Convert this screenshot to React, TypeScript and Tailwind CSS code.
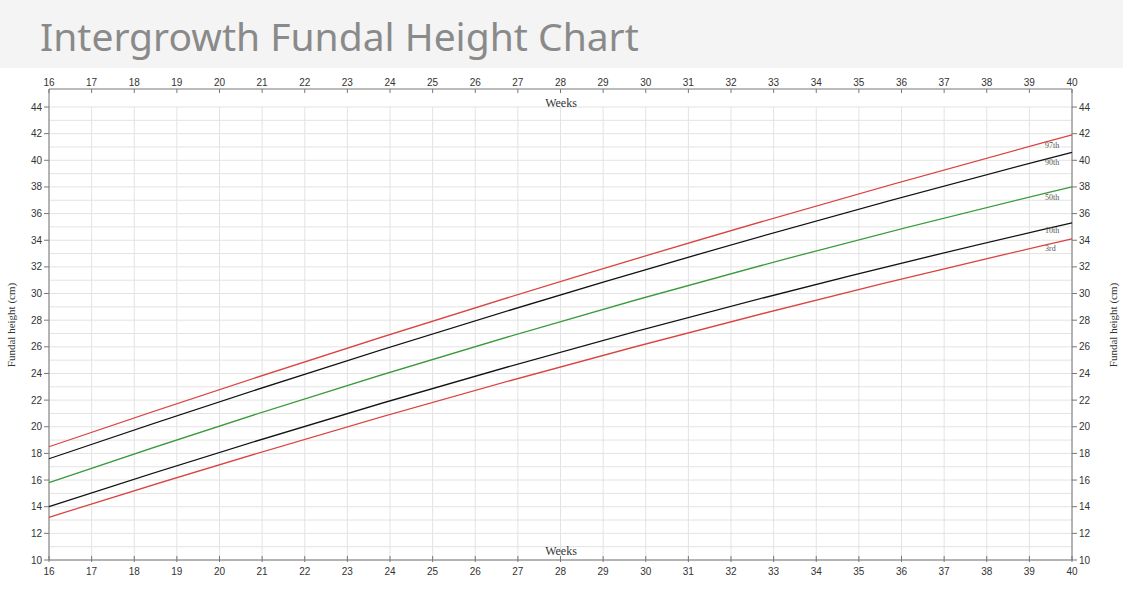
const X0 = 49;
const X1 = 1072;
const Y10 = 560;
const PX_CM = (560 - 107) / 34;
const xw = (w: number) => X0 + ((w - 16) * (X1 - X0)) / 24;
const yc = (c: number) => Y10 - (c - 10) * PX_CM;

const SERIF = '"Liberation Serif", serif';
const SANS = '"Liberation Sans", Arial, sans-serif';

const curves = [
  { name: '97th', a: 18.5, m: 30.9, b: 41.9, color: '#d9443f', ly: 41.3 },
  { name: '90th', a: 17.6, m: 29.9, b: 40.6, color: '#111', ly: 40.0 },
  { name: '50th', a: 15.8, m: 27.9, b: 38.0, color: '#3a9a3a', ly: 37.4 },
  { name: '10th', a: 14.0, m: 25.6, b: 35.3, color: '#111', ly: 34.9 },
  { name: '3rd', a: 13.2, m: 24.5, b: 34.1, color: '#d9443f', ly: 33.6 },
];

const weeks = Array.from({ length: 25 }, (_, i) => 16 + i);
const cms = Array.from({ length: 35 }, (_, i) => 10 + i);

// chart drawing, coordinates in page pixels (viewBox starts under the header)
function Chart() {
  return (
    <svg width="1123" height="532" viewBox="0 68 1123 532" className="block">
      {weeks.map((w) => (
        <line key={'v' + w} x1={xw(w)} x2={xw(w)} y1={yc(44)} y2={Y10} stroke="#e3e3e3" />
      ))}
      {cms.map((c) => (
        <line key={'h' + c} x1={X0} x2={X1} y1={yc(c)} y2={yc(c)} stroke="#e3e3e3" />
      ))}
      <line x1={X0} x2={X1} y1={89} y2={89} stroke="#777" />
      <line x1={X0} x2={X1} y1={Y10} y2={Y10} stroke="#777" />
      <line x1={X0} x2={X0} y1={89} y2={Y10} stroke="#777" />
      <line x1={X1} x2={X1} y1={89} y2={Y10} stroke="#777" />
      {weeks.map((w) => (
        <g key={'t' + w} fontFamily={SANS} fontSize="10" fill="#333" textAnchor="middle">
          <line x1={xw(w)} x2={xw(w)} y1={89} y2={93} stroke="#777" />
          <line x1={xw(w)} x2={xw(w)} y1={Y10 - 4} y2={Y10 + 2} stroke="#777" />
          <text x={xw(w)} y={86}>{w}</text>
          <text x={xw(w)} y={575}>{w}</text>
        </g>
      ))}
      {cms.filter((c) => c % 2 === 0).map((c) => (
        <g key={'y' + c} fontFamily={SANS} fontSize="10" fill="#333">
          <line x1={X0 - 5} x2={X0} y1={yc(c)} y2={yc(c)} stroke="#777" />
          <line x1={X1} x2={X1 + 5} y1={yc(c)} y2={yc(c)} stroke="#777" />
          <text x={X0 - 7} y={yc(c) + 3.5} textAnchor="end">{c}</text>
          <text x={X1 + 7} y={yc(c) + 3.5}>{c}</text>
        </g>
      ))}
      <text x={561} y={107} textAnchor="middle" fontSize="12" fill="#333" fontFamily={SERIF}>Weeks</text>
      <text x={561} y={555} textAnchor="middle" fontSize="12" fill="#333" fontFamily={SERIF}>Weeks</text>
      <text transform="translate(15 325) rotate(-90)" textAnchor="middle" fontSize="11" fill="#333" fontFamily={SERIF}>Fundal height (cm)</text>
      <text transform="translate(1117 325) rotate(-90)" textAnchor="middle" fontSize="11" fill="#333" fontFamily={SERIF}>Fundal height (cm)</text>
      {curves.map((c) => {
        const cy = 2 * yc(c.m) - (yc(c.a) + yc(c.b)) / 2;
        return (
          <g key={c.name}>
            <path d={`M${X0} ${yc(c.a)} Q${(X0 + X1) / 2} ${cy} ${X1} ${yc(c.b)}`} fill="none" stroke={c.color} strokeWidth="1.3" />
            <text x={1045} y={yc(c.ly) + 5} fontSize="8" fill="#555" fontFamily={SERIF}>{c.name}</text>
          </g>
        );
      })}
    </svg>
  );
}

export default function App() {
  return (
    <div className="w-[1123px] h-[600px] bg-white overflow-hidden">
      <div className="h-[68px] bg-[#f4f4f4] pl-[40px] pt-[12px] [font-family:'Liberation_Sans',Arial,sans-serif]">
        <h1 className="text-[39px] leading-[48px] text-[#8a8a8a]">
          Intergrowth Fundal Height Chart
        </h1>
      </div>
      <Chart />
    </div>
  );
}
